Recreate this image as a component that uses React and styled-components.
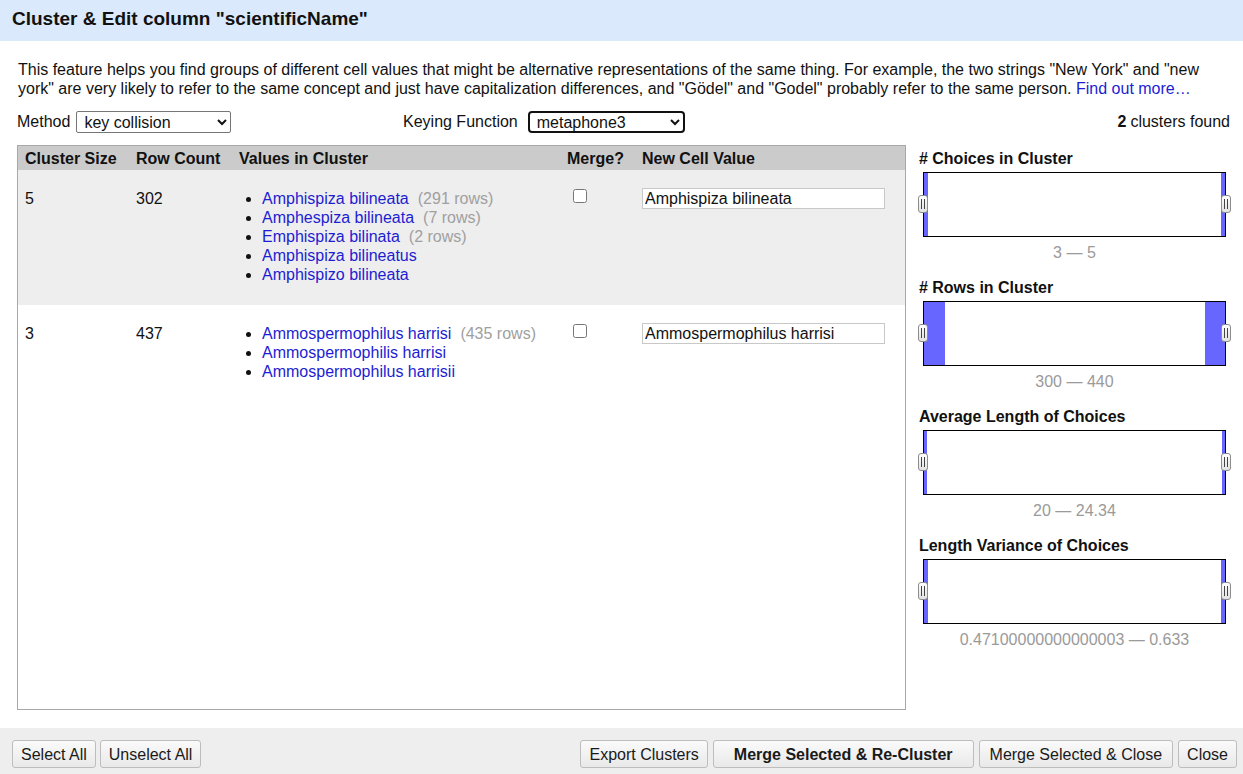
import styled, { createGlobalStyle } from "styled-components";

const GlobalStyle = createGlobalStyle`
    html, body {
        margin: 0;
        padding: 0;
        background: #fff;
    }
    body {
        font-family: "Liberation Sans", Arial, sans-serif;
        font-size: 16px;
        color: #111;
    }
`

const Page = styled.div`
    width: 1243px;
    height: 774px;
    display: flex;
    flex-direction: column;
    overflow: hidden;
`

const Header = styled.div`
    height: 41px;
    flex: 0 0 41px;
    box-sizing: border-box;
    background-color: #dbe9fc;
    display: flex;
    align-items: center;
    padding: 0 0 3px 12px;
    font-size: 19px;
    font-weight: bold;
    color: #111;
`

const Body = styled.div`
    flex: 1 1 auto;
    padding: 19px 13px 0 17px;
    display: flex;
    flex-direction: column;
`

const Description = styled.p`
    margin: 0 0 0 1px;
    line-height: 19px;
    color: #111;
`

const Link = styled.a`
    color: #1d1dd2;
    text-decoration: none;
    cursor: pointer;
`

const Controls = styled.div`
    margin-top: 12px;
    height: 22px;
    padding-top: 1px;
    display: grid;
    grid-template-columns: 386px auto 1fr;
    align-items: center;
`

const ControlGroup = styled.label`
    display: flex;
    align-items: center;
    gap: ${props => props.gap || 4}px;
`

const Select = styled.select`
    height: 22px;
    width: ${props => props.width}px;
    font-family: "Liberation Sans", Arial, sans-serif;
    font-size: 16px;
    color: #111;
    background: #fff;
    padding: 0 2px 0 3px;
    border: ${props => props.focused ? "2px solid #111" : "1px solid #767676"};
    border-radius: ${props => props.focused ? "4px" : "2px"};
    outline: none;
`

const Found = styled.div`
    justify-self: end;
    > b {
        margin-right: 4px;
    }
`

const Main = styled.div`
    margin-top: 12px;
    height: 565px;
    display: flex;
    gap: 13px;
`

const TableWrap = styled.div`
    flex: 1 1 auto;
    border: 1px solid #a8a8a8;
    background: #fff;
    overflow: hidden;
`

const Table = styled.table`
    width: 100%;
    table-layout: fixed;
    border-collapse: collapse;
`

const Th = styled.th`
    background-color: #cbcbcb;
    text-align: left;
    font-weight: bold;
    padding: 4px 7px 2px;
    line-height: 18px;
    white-space: nowrap;
`

const Row = styled.tr`
    background-color: ${props => props.shaded ? "#eeeeee" : "#ffffff"};
`

const Td = styled.td`
    vertical-align: top;
    padding: 19px 7px 21px;
    line-height: 19px;
`

const Values = styled.ul`
    margin: 0;
    padding-left: 23px;
    > li {
        line-height: 19px;
    }
`

const Count = styled.span`
    color: #a0a0a0;
    margin-left: 9px;
`

const Check = styled.input`
    display: block;
    margin: 0 0 0 6px;
    width: 14px;
    height: 14px;
`

const CellInput = styled.input`
    display: block;
    box-sizing: border-box;
    margin-top: -1px;
    width: 243px;
    height: 21px;
    padding: 0 2px;
    border: 1px solid #c8c8c8;
    font-family: "Liberation Sans", Arial, sans-serif;
    font-size: 16px;
    color: #111;
    background: #fff;
`

const Panel = styled.div`
    flex: 0 0 311px;
    padding-top: 5px;
`

const Facet = styled.div`
    & + & {
        margin-top: 17px;
    }
`

const FacetTitle = styled.div`
    font-weight: bold;
    line-height: 18px;
    margin-bottom: 4px;
`

const SliderBox = styled.div`
    position: relative;
    margin: 0 4px;
    height: 65px;
    box-sizing: border-box;
    border: 1px solid #000;
    background: #fff;
    display: flex;
    justify-content: space-between;
`

const Fill = styled.div`
    background-color: #6767ff;
    height: 100%;
`

const Handle = styled.div`
    position: absolute;
    top: 22px;
    ${props => props.side}: -6px;
    width: 8px;
    height: 16px;
    border: 1px solid #8c8c8c;
    border-radius: 3px;
    background: linear-gradient(#ffffff, #e2e2e2);
    &::before {
        content: "";
        position: absolute;
        left: 2px;
        top: 3px;
        width: 2px;
        height: 10px;
        border-left: 1px solid #444;
        border-right: 1px solid #444;
    }
`

const Range = styled.div`
    margin: 7px 4px 0;
    line-height: 18px;
    text-align: center;
    color: #9a9a9a;
`

const Footer = styled.div`
    height: 46px;
    flex: 0 0 46px;
    margin-top: 18px;
    box-sizing: border-box;
    background-color: #eeeeee;
    padding: 12px 6px 0 12px;
    display: flex;
    justify-content: space-between;
    align-items: flex-start;
`

const ButtonGroup = styled.div`
    display: flex;
    gap: ${props => props.gap || 4}px;
`

const Button = styled.button`
    height: 28px;
    padding: 1px ${props => props.pad || 8}px 0;
    font-family: "Liberation Sans", Arial, sans-serif;
    font-size: 16px;
    font-weight: ${props => props.primary ? "bold" : "normal"};
    color: #1a1a1a;
    background: linear-gradient(#fafafa, #e9e9e9);
    border: 1px solid #bdbdbd;
    border-radius: 3px;
    white-space: nowrap;
`

const clusters = [
    {
        size: 5,
        rows: 302,
        value: "Amphispiza bilineata",
        choices: [
            { v: "Amphispiza bilineata", c: 291 },
            { v: "Amphespiza bilineata", c: 7 },
            { v: "Emphispiza bilinata", c: 2 },
            { v: "Amphispiza bilineatus" },
            { v: "Amphispizo bilineata" },
        ],
    },
    {
        size: 3,
        rows: 437,
        value: "Ammospermophilus harrisi",
        choices: [
            { v: "Ammospermophilus harrisi", c: 435 },
            { v: "Ammospermophilis harrisi" },
            { v: "Ammospermophilus harrisii" },
        ],
    },
]

const facets = [
    { title: "# Choices in Cluster", left: 4, right: 4, range: "3 \u2014 5" },
    { title: "# Rows in Cluster", left: 21, right: 20, range: "300 \u2014 440" },
    { title: "Average Length of Choices", left: 3, right: 3, range: "20 \u2014 24.34" },
    { title: "Length Variance of Choices", left: 4, right: 4, range: "0.47100000000000003 \u2014 0.633" },
]

const App = () => {
    return (
        <Page>
            <GlobalStyle />
            <Header>Cluster &amp; Edit column "scientificName"</Header>
            <Body>
                <Description>
                    This feature helps you find groups of different cell values that might be alternative representations of the same thing. For example, the two strings "New York" and "new york" are very likely to refer to the same concept and just have capitalization differences, and "Gödel" and "Godel" probably refer to the same person. <Link>Find out more…</Link>
                </Description>
                <Controls>
                    <ControlGroup gap={6}>
                        Method
                        <Select width={155} defaultValue="key collision">
                            <option>key collision</option>
                            <option>nearest neighbor</option>
                        </Select>
                    </ControlGroup>
                    <ControlGroup gap={10}>
                        Keying Function
                        <Select width={157} focused defaultValue="metaphone3">
                            <option>fingerprint</option>
                            <option>ngram-fingerprint</option>
                            <option>metaphone3</option>
                            <option>cologne-phonetic</option>
                        </Select>
                    </ControlGroup>
                    <Found><b>2</b>clusters found</Found>
                </Controls>
                <Main>
                    <TableWrap>
                        <Table>
                            <colgroup>
                                <col style={{ width: 111 }} />
                                <col style={{ width: 103 }} />
                                <col style={{ width: 328 }} />
                                <col style={{ width: 75 }} />
                                <col />
                            </colgroup>
                            <thead>
                                <tr>
                                    <Th>Cluster Size</Th>
                                    <Th>Row Count</Th>
                                    <Th>Values in Cluster</Th>
                                    <Th>Merge?</Th>
                                    <Th>New Cell Value</Th>
                                </tr>
                            </thead>
                            <tbody>
                                {clusters.map((cl, i) => (
                                    <Row key={i} shaded={i % 2 === 0}>
                                        <Td>{cl.size}</Td>
                                        <Td>{cl.rows}</Td>
                                        <Td>
                                            <Values>
                                                {cl.choices.map(ch => (
                                                    <li key={ch.v}>
                                                        <Link>{ch.v}</Link>
                                                        {ch.c && <Count>({ch.c} rows)</Count>}
                                                    </li>
                                                ))}
                                            </Values>
                                        </Td>
                                        <Td><Check type="checkbox" /></Td>
                                        <Td><CellInput defaultValue={cl.value} /></Td>
                                    </Row>
                                ))}
                            </tbody>
                        </Table>
                    </TableWrap>
                    <Panel>
                        {facets.map(f => (
                            <Facet key={f.title}>
                                <FacetTitle>{f.title}</FacetTitle>
                                <SliderBox>
                                    <Fill style={{ width: f.left }} />
                                    <Fill style={{ width: f.right }} />
                                    <Handle side="left" />
                                    <Handle side="right" />
                                </SliderBox>
                                <Range>{f.range}</Range>
                            </Facet>
                        ))}
                    </Panel>
                </Main>
            </Body>
            <Footer>
                <ButtonGroup>
                    <Button>Select All</Button>
                    <Button>Unselect All</Button>
                </ButtonGroup>
                <ButtonGroup gap={5}>
                    <Button pad={8}>Export Clusters</Button>
                    <Button primary pad={20}>Merge Selected &amp; Re-Cluster</Button>
                    <Button pad={10}>Merge Selected &amp; Close</Button>
                    <Button pad={8}>Close</Button>
                </ButtonGroup>
            </Footer>
        </Page>
    )
}

export default App
